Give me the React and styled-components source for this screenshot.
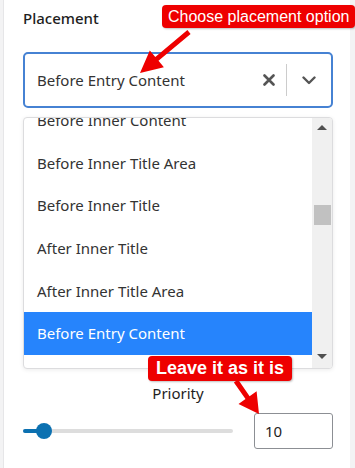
import styled, { createGlobalStyle } from 'styled-components';
import { useLayoutEffect, useRef } from 'react';

const GlobalStyle = createGlobalStyle`
    html, body {
        margin: 0;
        padding: 0;
        background: #ffffff;
    }
    * {
        box-sizing: border-box;
    }
`;

const Page = styled.div`
    position: relative;
    display: flex;
    width: 355px;
    height: 468px;
    background: #f3f3f4;
    font-family: 'Noto Sans', 'Open Sans', sans-serif;
    color: #1e1e1e;
    overflow: hidden;
`;

const Panel = styled.div`
    flex: 1;
    display: flex;
    flex-direction: column;
    margin: 0 5px 0 3px;
    padding: 8px 17px 0 19px;
    background: #ffffff;
    border-left: 1px solid #e6e6e8;
`;

const Label = styled.div`
    font-size: 15px;
    font-weight: 500;
    line-height: 20px;
    color: #1e1e1e;
`;

const Control = styled.div`
    display: flex;
    align-items: center;
    height: 56px;
    margin-top: 24px;
    padding-left: 12px;
    border: 2px solid #4682d3;
    border-radius: 5px;
    background: #fff;
`;

const Value = styled.div`
    flex: 1;
    font-size: 15px;
    color: #333;
`;

const IconButton = styled.div`
    display: flex;
    align-items: center;
    justify-content: center;
    width: ${(p) => p.$w}px;
    height: 100%;
    color: #555;
`;

const Divider = styled.span`
    width: 1px;
    height: 32px;
    background: #cccccc;
`;

const Menu = styled.div`
    display: flex;
    height: 252px;
    margin-top: 9px;
    border: 1px solid #dcdcde;
    border-radius: 4px;
    background: #fff;
    box-shadow: 0 1px 4px rgba(0, 0, 0, 0.08);
    overflow: hidden;
`;

const Options = styled.div`
    flex: 1;
    overflow: hidden;
`;

const Option = styled.div`
    display: flex;
    align-items: center;
    height: 42.6px;
    padding-left: 13px;
    font-size: 15px;
    color: ${(p) => (p.$active ? '#ffffff' : '#333333')};
    background: ${(p) => (p.$active ? '#2684fc' : 'transparent')};
`;

const Scrollbar = styled.div`
    display: flex;
    flex-direction: column;
    align-items: center;
    width: 20px;
    padding: 7px 0 9px;
    background: #f0f0f0;
`;

const ScrollTrack = styled.div`
    flex: 1;
    width: 100%;
    padding: 75px 1px 0 2px;
`;

const Thumb = styled.div`
    height: 20px;
    background: #c1c1c1;
`;

const Tri = styled.span`
    width: 0;
    height: 0;
    border-left: 5px solid transparent;
    border-right: 5px solid transparent;
    ${(p) =>
        p.$up
            ? 'border-bottom: 5px solid #505050;'
            : 'border-top: 5px solid #505050;'}
`;

const PriorityLabel = styled.div`
    margin-top: 14px;
    font-size: 15px;
    line-height: 20px;
    text-align: center;
    color: #1e1e1e;
`;

const SliderRow = styled.div`
    display: flex;
    align-items: center;
    gap: 21px;
    margin-top: 10px;
`;

const Track = styled.div`
    position: relative;
    flex: 1;
    height: 4px;
    border-radius: 2px;
    background: #dddddd;
`;

const Fill = styled.div`
    height: 100%;
    border-radius: 2px;
    background: #0c71b1;
`;

const Knob = styled.span`
    position: absolute;
    top: 50%;
    width: 16px;
    height: 16px;
    margin: -8px 0 0 -8px;
    border-radius: 50%;
    background: #0c71b1;
`;

const NumberBox = styled.div`
    display: flex;
    align-items: center;
    width: 79px;
    height: 36px;
    padding-left: 10px;
    border: 1px solid #8c8f94;
    border-radius: 3px;
    font-size: 15px;
    color: #1e1e1e;
`;

const Callout = styled.div`
    position: absolute;
    left: ${(p) => p.$x}px;
    top: ${(p) => p.$y}px;
    height: ${(p) => p.$h}px;
    display: flex;
    align-items: center;
    padding: 0 ${(p) => p.$pad}px;
    border-radius: 4px;
    background: #ee0000;
    color: #ffffff;
    font-family: 'Liberation Sans', Arial, sans-serif;
    font-size: ${(p) => p.$size}px;
    font-weight: ${(p) => (p.$bold ? 700 : 400)};
    white-space: nowrap;
    box-shadow: 1px 1px 2px rgba(0, 0, 0, 0.25);
`;

const Overlay = styled.svg`
    position: absolute;
    left: 0;
    top: 0;
    pointer-events: none;
`;

function arrowPoints(x1, y1, x2, y2, shaft, headLen, headW) {
    const dx = x2 - x1;
    const dy = y2 - y1;
    const len = Math.hypot(dx, dy);
    const ux = dx / len;
    const uy = dy / len;
    const nx = -uy;
    const ny = ux;
    const bx = x2 - ux * headLen;
    const by = y2 - uy * headLen;
    const pts = [
        [x1 + (nx * shaft) / 2, y1 + (ny * shaft) / 2],
        [bx + (nx * shaft) / 2, by + (ny * shaft) / 2],
        [bx + (nx * headW) / 2, by + (ny * headW) / 2],
        [x2, y2],
        [bx - (nx * headW) / 2, by - (ny * headW) / 2],
        [bx - (nx * shaft) / 2, by - (ny * shaft) / 2],
        [x1 - (nx * shaft) / 2, y1 - (ny * shaft) / 2],
    ];
    return pts.map((p) => p.map((v) => v.toFixed(1)).join(',')).join(' ');
}

const items = [
    'Before Inner Content',
    'Before Inner Title Area',
    'Before Inner Title',
    'After Inner Title',
    'After Inner Title Area',
    'Before Entry Content',
    'After Entry Content',
];

function App() {
    const listRef = useRef(null);

    useLayoutEffect(() => {
        if (listRef.current) listRef.current.scrollTop = 19;
    }, []);

    return (
        <Page>
            <GlobalStyle />
            <Panel>
                <Label>Placement</Label>
                <Control>
                    <Value>Before Entry Content</Value>
                    <IconButton $w={34}>
                        <svg width="12" height="12" viewBox="0 0 12 12">
                            <path
                                d="M1.5 1.5 L10.5 10.5 M10.5 1.5 L1.5 10.5"
                                stroke="currentColor"
                                strokeWidth="2.6"
                                strokeLinecap="round"
                            />
                        </svg>
                    </IconButton>
                    <Divider />
                    <IconButton $w={44}>
                        <svg width="14" height="9" viewBox="0 0 14 9">
                            <path
                                d="M1.5 1.5 L7 7 L12.5 1.5"
                                stroke="currentColor"
                                strokeWidth="2.4"
                                fill="none"
                                strokeLinecap="round"
                                strokeLinejoin="round"
                            />
                        </svg>
                    </IconButton>
                </Control>
                <Menu>
                    <Options ref={listRef}>
                        {items.map((item) => (
                            <Option key={item} $active={item === 'Before Entry Content'}>
                                {item}
                            </Option>
                        ))}
                    </Options>
                    <Scrollbar>
                        <Tri $up />
                        <ScrollTrack>
                            <Thumb />
                        </ScrollTrack>
                        <Tri />
                    </Scrollbar>
                </Menu>
                <PriorityLabel>Priority</PriorityLabel>
                <SliderRow>
                    <Track>
                        <Fill style={{ width: '10%' }} />
                        <Knob style={{ left: '10%' }} />
                    </Track>
                    <NumberBox>10</NumberBox>
                </SliderRow>
            </Panel>

            <Callout $x={162} $y={5} $h={23} $pad={6} $size={16}>
                Choose placement option
            </Callout>
            <Callout $x={148} $y={356} $h={25} $pad={8} $size={18} $bold>
                Leave it as it is
            </Callout>
            <Overlay width="355" height="468">
                <polygon points={arrowPoints(189, 32, 140, 73, 5, 22, 22)} fill="#ee0000" />
                <polygon points={arrowPoints(236, 381, 259, 414, 5, 20, 22)} fill="#ee0000" />
            </Overlay>
        </Page>
    );
}

export default App;
